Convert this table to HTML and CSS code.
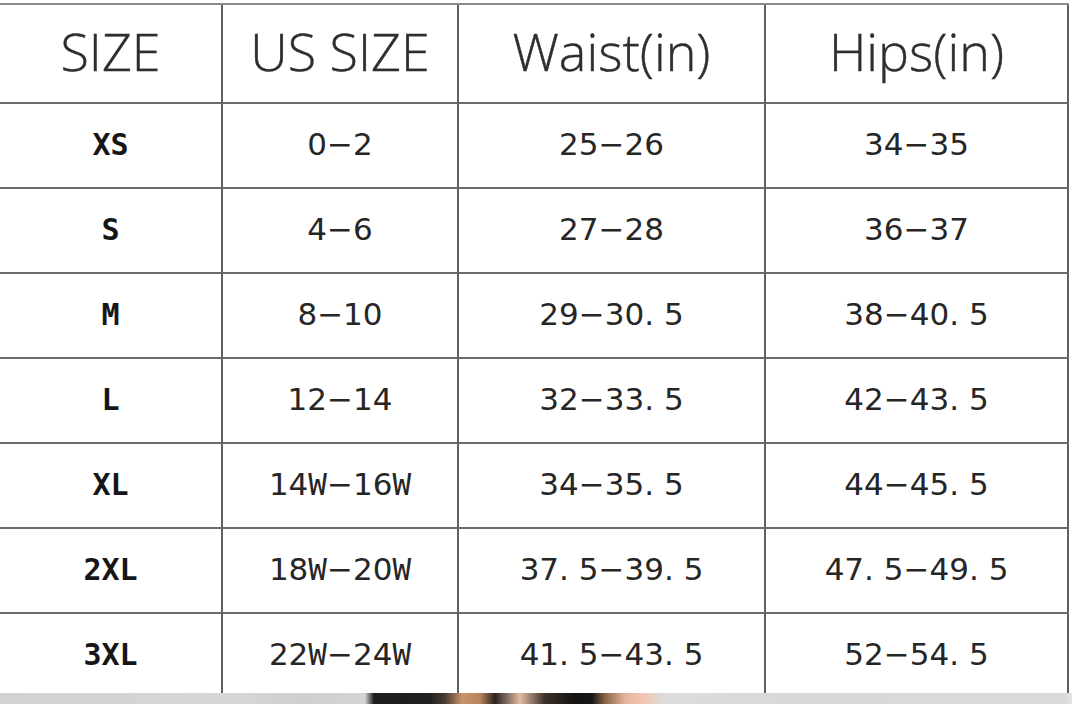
FILE: index.html
```html
<!DOCTYPE html>
<html lang="en">
<head>
<meta charset="utf-8">
<title>Size chart</title>
<link rel="stylesheet" href="styles.css">
</head>
<body>
<div class="sheet">
  <div class="chart">
    <div class="cell head">SIZE</div>
    <div class="cell head">US SIZE</div>
    <div class="cell head">Waist(in)</div>
    <div class="cell head">Hips(in)</div>

    <div class="cell size">XS</div>
    <div class="cell num">0−2</div>
    <div class="cell num">25−26</div>
    <div class="cell num">34−35</div>

    <div class="cell size">S</div>
    <div class="cell num">4−6</div>
    <div class="cell num">27−28</div>
    <div class="cell num">36−37</div>

    <div class="cell size">M</div>
    <div class="cell num">8−10</div>
    <div class="cell num">29−30. 5</div>
    <div class="cell num">38−40. 5</div>

    <div class="cell size">L</div>
    <div class="cell num">12−14</div>
    <div class="cell num">32−33. 5</div>
    <div class="cell num">42−43. 5</div>

    <div class="cell size">XL</div>
    <div class="cell num">14<span class="w">W</span>−16<span class="w">W</span></div>
    <div class="cell num">34−35. 5</div>
    <div class="cell num">44−45. 5</div>

    <div class="cell size">2XL</div>
    <div class="cell num">18<span class="w">W</span>−20<span class="w">W</span></div>
    <div class="cell num">37. 5−39. 5</div>
    <div class="cell num">47. 5−49. 5</div>

    <div class="cell size">3XL</div>
    <div class="cell num">22<span class="w">W</span>−24<span class="w">W</span></div>
    <div class="cell num">41. 5−43. 5</div>
    <div class="cell num">52−54. 5</div>
  </div>
</div>
<div class="strip"></div>
</body>
</html>
```
FILE: styles.css
```css
html, body {
  margin: 0;
  padding: 0;
  background: #ffffff;
}

.sheet {
  height: 693px;
  overflow: hidden;
  background: #ffffff;
}

.chart {
  margin-top: 3px;
  width: 1069px;
  border-top: 2px solid #8c8c8c;
  display: grid;
  grid-template-columns: 223px 236px 307px 303px;
  grid-template-rows: 99px;
  grid-auto-rows: 85px;
}

.cell {
  box-sizing: border-box;
  border-right: 2px solid #606060;
  border-bottom: 2px solid #6a6a6a;
  display: flex;
  align-items: center;
  justify-content: center;
  white-space: nowrap;
}

.head {
  font-family: "Open Sans", "Noto Sans", sans-serif;
  font-weight: 300;
  font-size: 52px;
  color: #2e2e2e;
  padding-bottom: 6px;
  -webkit-text-stroke: 0.4px #2e2e2e;
}

.size {
  font-family: "DejaVu Sans Mono", monospace;
  font-weight: bold;
  font-size: 30px;
  color: #161616;
  padding-bottom: 2px;
}

.num {
  font-family: "DejaVu Sans", sans-serif;
  font-size: 31px;
  color: #262626;
  padding-bottom: 3px;
}

.w {
  font-family: "DejaVu Sans Mono", monospace;
}

.strip {
  height: 11px;
  background: linear-gradient(to right,
    #d2d2d2 0px, #d6d6d6 240px, #cfcfcf 300px, #d4d4d4 365px,
    #1c1c1c 374px, #202020 430px, #4a3a30 445px, #c8946c 462px,
    #b8845c 480px, #2a2420 495px, #e2bca4 520px, #3a302a 545px,
    #141414 575px, #171717 592px, #8a6444 605px, #e6b49c 625px,
    #f0c8b4 645px, #dcdcdc 665px, #d8d8d8 800px, #dadada 1066px,
    #e4e4e4 1072px);
}
```
